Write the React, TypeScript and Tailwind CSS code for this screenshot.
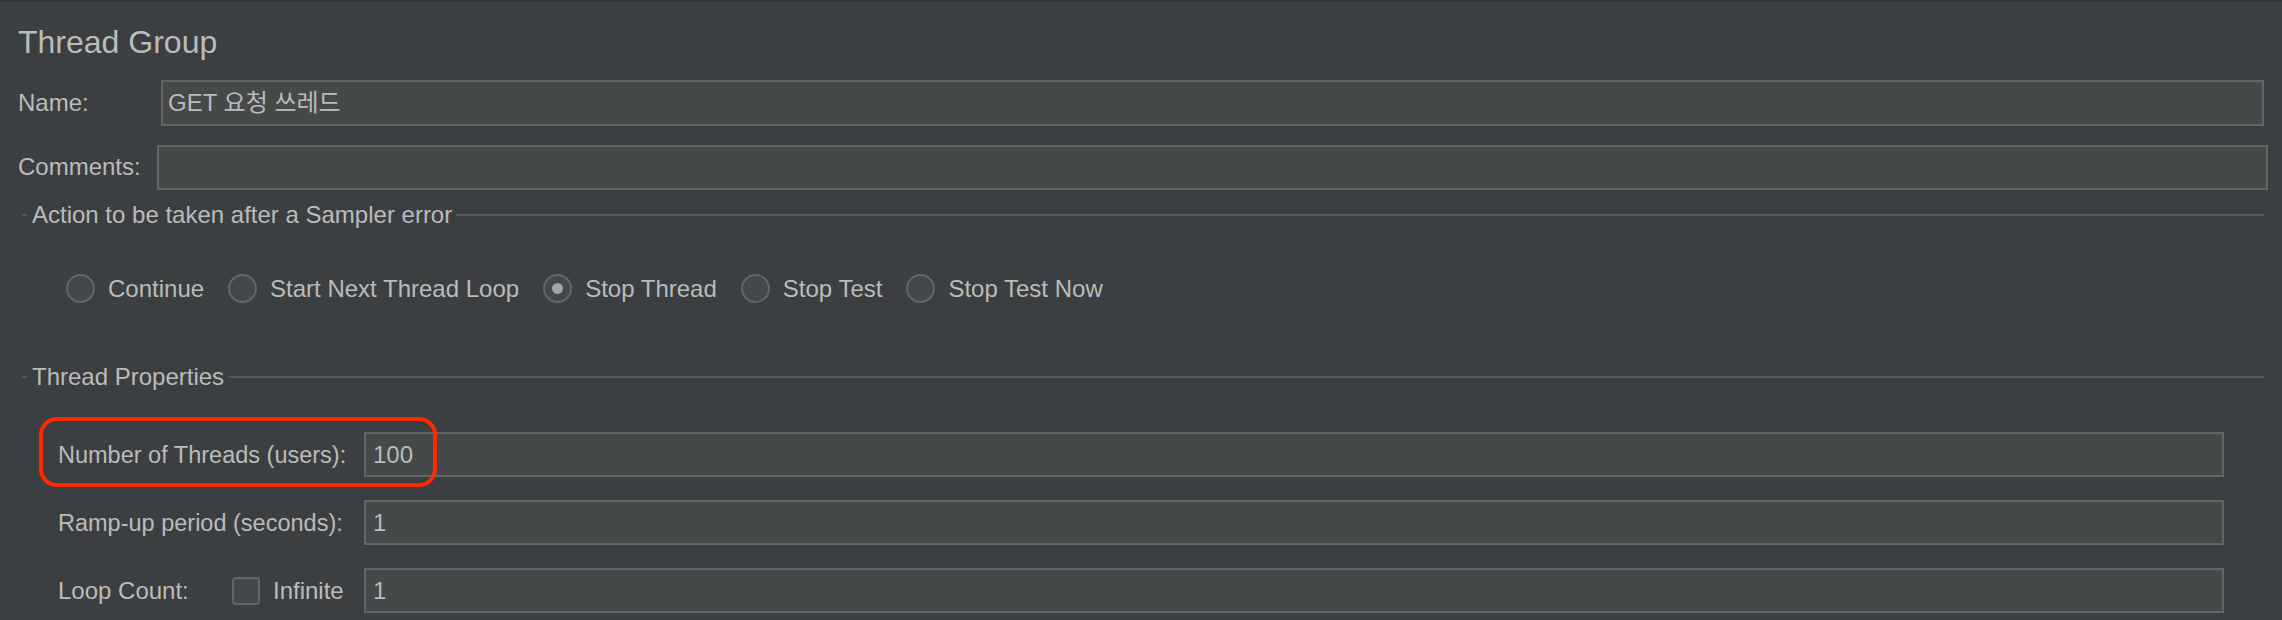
import type { ReactNode } from "react";

type FieldProps = {
  value?: string;
  className?: string;
};

function Field({ value, className = "" }: FieldProps) {
  return (
    <div
      className={`flex items-center border-2 border-[#646464] bg-[#45494a] text-[24px] leading-6 text-[#bbbbbb] ${className}`}
    >
      {value}
    </div>
  );
}

function GroupTitle({ label, className = "" }: { label: string; className?: string }) {
  return (
    <div className={`ml-[22px] mr-[18px] flex h-6 items-center ${className}`}>
      <div className="h-[2px] w-[5px] bg-[#55585a]" />
      <span className="ml-[5px] mr-[4px] text-[24px] leading-6 text-[#bbbbbb]">
        {label}
      </span>
      <div className="h-[2px] flex-1 bg-[#55585a]" />
    </div>
  );
}

function Radio({ label, checked = false }: { label: string; checked?: boolean }) {
  return (
    <div className="flex items-center gap-[13px]">
      <div className="flex h-[29px] w-[29px] items-center justify-center rounded-full border-2 border-[#656565] bg-[#43484a]">
        {checked && <div className="h-[11px] w-[11px] rounded-full bg-[#a3a3a3]" />}
      </div>
      <span className="text-[24px] leading-6 text-[#bbbbbb]">{label}</span>
    </div>
  );
}

function Row({ children, className = "" }: { children: ReactNode; className?: string }) {
  return <div className={`flex items-center ${className}`}>{children}</div>;
}

export default function App() {
  return (
    <div className="flex h-[620px] w-full flex-col overflow-hidden bg-[#3c3f41] font-['Liberation_Sans','Noto_Sans_CJK_KR',sans-serif] text-[#bbbbbb]">
      <div className="h-[2px] bg-[#313335]" />

      <div className="mt-[24px] h-8 pl-[18px] text-[32px] leading-8">Thread Group</div>

      <Row className="mt-[22px] h-[46px]">
        <span className="w-[161px] shrink-0 pl-[18px] text-[24px] leading-6">Name:</span>
        <Field value="GET 요청 쓰레드" className="mr-[18px] h-[46px] flex-1 pl-[5px]" />
      </Row>

      <Row className="mt-[18px] h-[46px]">
        <span className="w-[157px] shrink-0 pl-[18px] text-[24px] leading-6">Comments:</span>
        <Field className="mr-[14px] h-[45px] flex-1" />
      </Row>

      <GroupTitle label="Action to be taken after a Sampler error" className="mt-[13px]" />

      <div className="ml-[66px] mt-[47px] flex h-[29px] items-center gap-[24px]">
        <Radio label="Continue" />
        <Radio label="Start Next Thread Loop" />
        <Radio label="Stop Thread" checked />
        <Radio label="Stop Test" />
        <Radio label="Stop Test Now" />
      </div>

      <GroupTitle label="Thread Properties" className="mt-[62px]" />

      <Row className="relative mt-[43px] h-[45px] pl-[58px]">
        <span className="w-[306px] shrink-0 text-[23.5px] leading-6">Number of Threads (users):</span>
        <Field value="100" className="mr-[58px] h-[45px] flex-1 pl-[7px]" />
        <div className="pointer-events-none absolute left-[39px] top-[-15px] h-[70px] w-[398px] rounded-[18px] border-4 border-[#ff2a00]" />
      </Row>

      <Row className="mt-[23px] h-[45px] pl-[58px]">
        <span className="w-[306px] shrink-0 text-[23.5px] leading-6">Ramp-up period (seconds):</span>
        <Field value="1" className="mr-[58px] h-[45px] flex-1 pl-[7px]" />
      </Row>

      <Row className="mt-[23px] h-[45px] pl-[58px]">
        <div className="flex w-[306px] shrink-0 items-center">
          <span className="w-[174px] text-[24px] leading-6">Loop Count:</span>
          <div className="h-[28px] w-[28px] rounded-[4px] border-2 border-[#656565] bg-[#43484a]" />
          <span className="ml-[13px] text-[24px] leading-6">Infinite</span>
        </div>
        <Field value="1" className="mr-[58px] h-[45px] flex-1 pl-[7px]" />
      </Row>
    </div>
  );
}
